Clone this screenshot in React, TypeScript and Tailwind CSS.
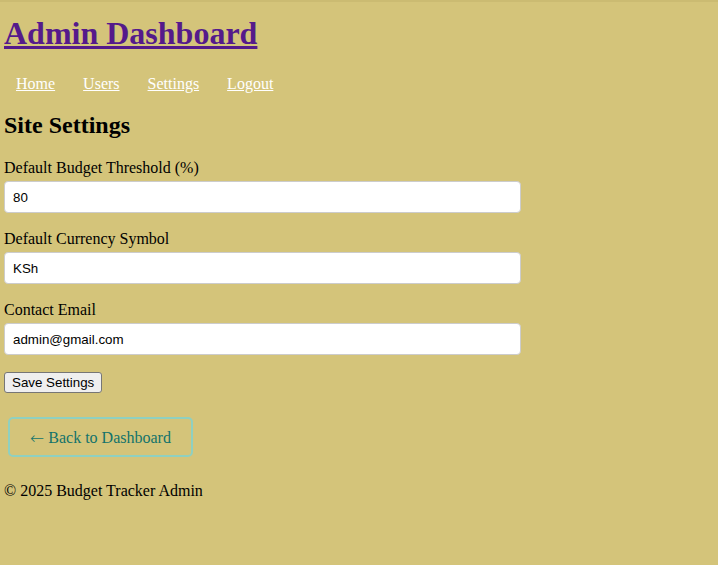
export default function App() {
  const fields = [
    { label: "Default Budget Threshold (%)", value: "80" },
    { label: "Default Currency Symbol", value: "KSh" },
    { label: "Contact Email", value: "admin@gmail.com" },
  ];

  const links = ["Home", "Users", "Settings", "Logout"];

  return (
    <div className="min-h-screen bg-[#d4c47a] font-['Liberation_Serif',serif] text-black border-t-2 border-[#cbbb72]">
      <div className="px-[4px] pt-[13px]">
        {/* Header */}
        <h1 className="text-[32px] leading-[37px] font-bold">
          <a href="#" className="text-[#551a8b] underline">
            Admin Dashboard
          </a>
        </h1>

        <nav className="mt-[23px] flex gap-[28px] pl-[12px] text-[16px] leading-[18px]">
          {links.map((l) => (
            <a key={l} href="#" className="text-white underline">
              {l}
            </a>
          ))}
        </nav>

        {/* Settings form */}
        <h2 className="mt-[18px] text-[24px] leading-[28px] font-bold">Site Settings</h2>

        <form className="mt-[20px] flex flex-col">
          {fields.map((f, i) => (
            <div key={i} className="flex flex-col mb-[17px]">
              <label className="text-[16px] leading-[18px]">{f.label}</label>
              <input
                defaultValue={f.value}
                className="mt-[4px] w-[517px] h-[32px] px-[8px] bg-white border border-[#cccccc] rounded-[4px] font-['Liberation_Sans',Arial,sans-serif] text-[13.333px] text-black outline-none"
              />
            </div>
          ))}
          <div className="flex">
            <button
              type="button"
              className="px-[7px] py-[2px] bg-[#efefef] border border-[#767676] rounded-[3px] font-['Liberation_Sans',Arial,sans-serif] text-[13.333px] leading-[15px] text-black"
            >
              Save Settings
            </button>
          </div>
        </form>

        <div className="mt-[24px] ml-[4px] flex">
          <a
            href="#"
            className="flex items-center justify-center gap-[4px] w-[185px] h-[40px] pt-[2px] border-2 border-[#8fd0c0] rounded-[5px] text-[#12736b] text-[16px] leading-[18px]"
          >
            <span className="font-['DejaVu_Sans',sans-serif] font-light text-[17px] leading-[18px]">←</span>
            <span>Back to Dashboard</span>
          </a>
        </div>

        <footer className="mt-[25px] text-[16px] leading-[18px]">© 2025 Budget Tracker Admin</footer>
      </div>
    </div>
  );
}
